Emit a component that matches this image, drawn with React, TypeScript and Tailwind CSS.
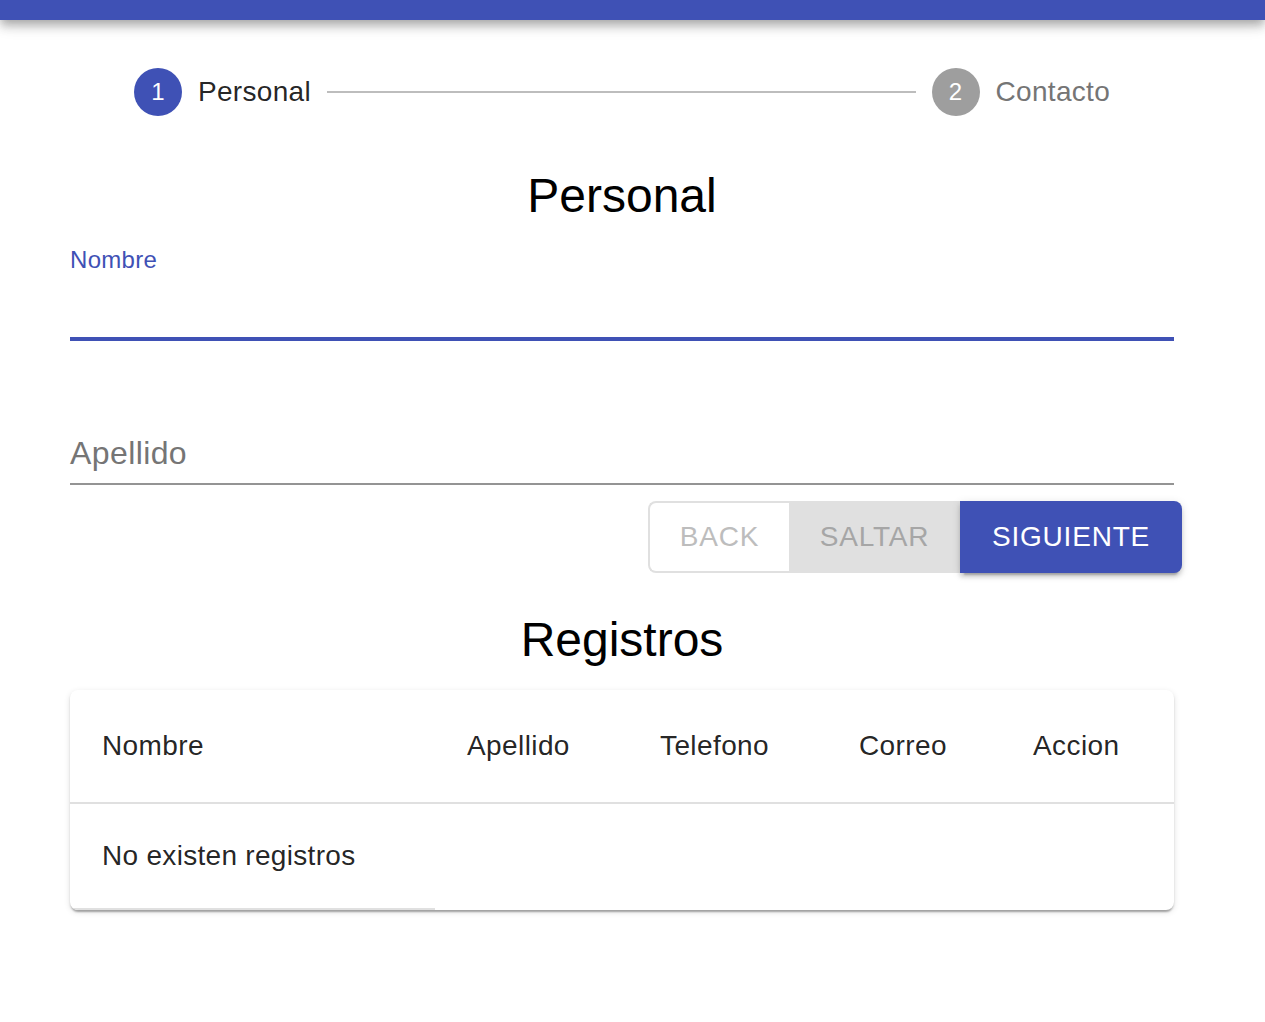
import React from "react";

export default function App() {
  const cols = ["Nombre", "Apellido", "Telefono", "Correo", "Accion"];
  return (
    <div className="min-h-screen bg-white text-[rgba(0,0,0,0.87)]" style={{ fontFamily: '"Liberation Sans", Arial, sans-serif' }}>
      <div className="relative z-10 h-[20px] bg-[#3f51b5] shadow-[0_4px_8px_-2px_rgba(0,0,0,0.2),0_8px_10px_0_rgba(0,0,0,0.14),0_2px_20px_0_rgba(0,0,0,0.12)]" />
      <div className="ml-[70px] w-[1104px]">
        {/* Stepper */}
        <div className="flex items-center px-[48px] py-[48px]">
          <div className="flex items-center px-[16px]">
            <div className="flex h-[48px] w-[48px] items-center justify-center rounded-full bg-[#3f51b5] text-[24px] text-white">1</div>
            <span className="pl-[16px] text-[28px] leading-[40px] tracking-[0.3px] text-[rgba(0,0,0,0.87)]">Personal</span>
          </div>
          <div className="flex-1 border-t-2 border-[#bdbdbd]" />
          <div className="flex items-center px-[16px]">
            <div className="flex h-[48px] w-[48px] items-center justify-center rounded-full bg-[#9e9e9e] text-[24px] text-white">2</div>
            <span className="pl-[16px] text-[28px] leading-[40px] tracking-[0.3px] text-[#757575]">Contacto</span>
          </div>
        </div>

        <h2 className="h-[64px] text-center text-[48px] leading-[64px] text-black">Personal</h2>

        {/* Field 1 (focused) */}
        <div className="relative mt-[17px] pt-[32px]">
          <label className="absolute left-0 top-[3px] text-[24px] leading-none tracking-[0.3px] text-[#3f51b5]">Nombre</label>
          <div className="h-[64px] border-b-4 border-[#3f51b5]" />
        </div>

        {/* Field 2 */}
        <div className="relative mt-[48px] pt-[32px]">
          <label className="absolute left-0 top-[48px] text-[32px] leading-none tracking-[0.4px] text-[#757575]">Apellido</label>
          <div className="h-[64px] border-b-2 border-[#949494]" />
        </div>

        {/* Buttons */}
        <div className="mr-[-8px] mt-[16px] flex justify-end">
          <button className="flex h-[72px] w-[141px] items-center justify-center rounded-l-[8px] border-2 border-r-0 border-[#e0e0e0] bg-white text-[28px] uppercase tracking-[0.8px] text-[#bdbdbd]">
            Back
          </button>
          <button className="flex h-[72px] w-[171px] items-center justify-center bg-[#e0e0e0] text-[28px] uppercase tracking-[0.8px] text-[#a6a6a6]">
            Saltar
          </button>
          <button className="flex h-[72px] w-[222px] items-center justify-center rounded-r-[8px] bg-[#3f51b5] text-[28px] uppercase tracking-[0.8px] text-white shadow-[0_6px_2px_-4px_rgba(0,0,0,0.2),0_4px_4px_0_rgba(0,0,0,0.14),0_2px_10px_0_rgba(0,0,0,0.12)]">
            Siguiente
          </button>
        </div>

        <h2 className="mt-[35px] h-[64px] text-center text-[48px] leading-[64px] text-black">Registros</h2>

        {/* Table */}
        <div className="mt-[18px] overflow-hidden rounded-[8px] bg-white shadow-[0_4px_2px_-2px_rgba(0,0,0,0.2),0_2px_2px_0_rgba(0,0,0,0.14),0_2px_6px_0_rgba(0,0,0,0.12)]">
          <div className="grid grid-cols-[365px_193px_199px_174px_173px] border-b-2 border-[#e0e0e0]">
            {cols.map((c) => (
              <div key={c} className="flex h-[112px] items-center whitespace-nowrap px-[32px] text-[28px] leading-[48px] tracking-[0.4px] text-[rgba(0,0,0,0.87)]">
                {c}
              </div>
            ))}
          </div>
          <div className="flex">
            <div className="w-[365px] whitespace-nowrap border-b-2 border-[#e0e0e0] px-[32px] py-[32px] text-[28px] leading-[40px] tracking-[0.3px] text-[rgba(0,0,0,0.87)]">
              No existen registros
            </div>
          </div>
        </div>
      </div>
    </div>
  );
}
